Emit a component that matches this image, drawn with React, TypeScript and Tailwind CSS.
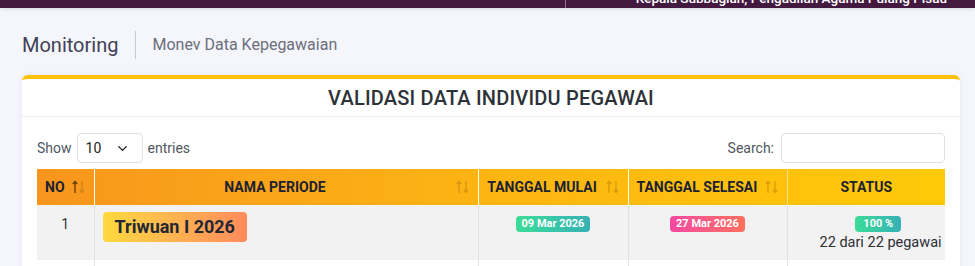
import { ChevronDown } from "lucide-react";

function Arrow({ up, className }: { up?: boolean; className: string }) {
    return (
        <svg width="6" height="14" viewBox="0 0 6 14" className={className}>
            {up ? (
                <path d="M3 1.5V13M0.8 4L3 1.5L5.2 4" fill="none" stroke="currentColor" strokeWidth="1.3" />
            ) : (
                <path d="M3 1V12.5M0.8 10L3 12.5L5.2 10" fill="none" stroke="currentColor" strokeWidth="1.3" />
            )}
        </svg>
    );
}

function SortIcon({ active }: { active?: boolean }) {
    return (
        <span className="absolute right-[9px] top-1/2 -translate-y-1/2 flex gap-[1px]">
            <Arrow up className={active ? "text-[#3b2a00] opacity-80" : "text-[#7a5200] opacity-30"} />
            <Arrow className="text-[#7a5200] opacity-30" />
        </span>
    );
}

export default function App() {
    return (
        <div className="w-[975px] h-[266px] overflow-hidden bg-[#f5f5fc] font-['Roboto',sans-serif]">
            {/* top bar */}
            <div className="h-[8px] bg-[#43193f] flex overflow-hidden shadow-[0_1px_4px_rgba(0,0,0,0.12)] relative z-10">
                <div className="w-[565px]" />
                <div className="flex-1 border-l border-white/40 flex justify-end pr-[28px]">
                    <span className="mt-[-9px] text-[13.5px] leading-[14px] font-medium text-white whitespace-nowrap">
                        Kepala Subbagian, Pengadilan Agama Pulang Pisau
                    </span>
                </div>
            </div>

            {/* breadcrumb */}
            <div className="flex items-center px-[22px] pt-[23px]">
                <span className="text-[20px] text-[#3f4254] leading-none">Monitoring</span>
                <div className="w-px h-[28px] bg-[#c7c9d3] ml-[17px] mr-[16px]" />
                <span className="text-[16px] text-[#6b6f7b]">Monev Data Kepegawaian</span>
            </div>

            {/* card */}
            <div className="ml-[22px] mt-[16px] w-[938px] bg-white rounded-[6px] border-t-4 border-[#ffc107] shadow-[0_0_6px_rgba(80,80,160,0.08)]">
                <div className="h-[38px] flex items-center justify-center border-b border-[#eceef2]">
                    <h2 className="text-[20px] font-medium text-[#2d3238] tracking-[0.2px]">VALIDASI DATA INDIVIDU PEGAWAI</h2>
                </div>

                <div className="px-[15px] pt-[16px]">
                    <div className="flex items-center justify-between mb-[6px] text-[14px] text-[#505660]">
                        <div className="flex items-center gap-[5px]">
                            <span>Show</span>
                            <div className="w-[66px] h-[30px] border border-[#dfe2e6] rounded-[4px] flex items-center justify-between pl-[8px] pr-[12px] text-[#222]">
                                <span>10</span>
                                <ChevronDown size={15} strokeWidth={2.2} />
                            </div>
                            <span>entries</span>
                        </div>
                        <div className="flex items-center gap-[7px]">
                            <span>Search:</span>
                            <div className="w-[164px] h-[30px] border border-[#dfe2e6] rounded-[4px]" />
                        </div>
                    </div>

                    <table className="w-[908px] border-collapse table-fixed">
                        <colgroup>
                            <col className="w-[57px]" />
                            <col className="w-[384px]" />
                            <col className="w-[150px]" />
                            <col className="w-[159px]" />
                            <col className="w-[158px]" />
                        </colgroup>
                        <thead>
                            <tr className="h-[36px] bg-gradient-to-r from-[#f7951d] via-[#fdb512] to-[#ffc908] text-[14px] font-bold text-[#1c2230]">
                                <th className="relative text-left pl-[8px] border-r border-white/50">
                                    NO
                                    <SortIcon active />
                                </th>
                                <th className="relative pl-[8px] pr-[30px] border-r border-white/50">
                                    NAMA PERIODE
                                    <SortIcon />
                                </th>
                                <th className="relative pl-[8px] pr-[30px] border-r border-white/50 whitespace-nowrap">
                                    TANGGAL MULAI
                                    <SortIcon />
                                </th>
                                <th className="relative pl-[8px] pr-[30px] border-r border-white/50 whitespace-nowrap">
                                    TANGGAL SELESAI
                                    <SortIcon />
                                </th>
                                <th className="px-[8px]">STATUS</th>
                            </tr>
                        </thead>
                        <tbody>
                            <tr className="bg-[#f2f2f2] align-top h-[55px] leading-none">
                                <td className="text-center pt-[9px] text-[14px] leading-[20px] text-[#333] border-r border-[#e2e2e2]">1</td>
                                <td className="px-[8px] pt-[7px] border-r border-[#e2e2e2]">
                                    <span className="inline-block align-top h-[30px] leading-[30px] px-[12px] rounded-[4px] bg-gradient-to-r from-[#ffd93d] to-[#ff8a5b] text-[18px] font-bold text-[#1f2733]">
                                        Triwuan I 2026
                                    </span>
                                </td>
                                <td className="text-center pt-[11px] border-r border-[#e2e2e2]">
                                    <span className="inline-block align-top h-[16px] leading-[16px] px-[6px] rounded-[4px] bg-gradient-to-r from-[#3ddc97] to-[#36b1b5] text-[11px] font-bold text-white">
                                        09 Mar 2026
                                    </span>
                                </td>
                                <td className="text-center pt-[11px] border-r border-[#e2e2e2]">
                                    <span className="inline-block align-top h-[16px] leading-[16px] px-[6px] rounded-[4px] bg-gradient-to-r from-[#f7479f] to-[#ff6f5e] text-[11px] font-bold text-white">
                                        27 Mar 2026
                                    </span>
                                </td>
                                <td className="text-center pt-[11px] pl-[32px] pr-[8px]">
                                    <span className="inline-block align-top h-[16px] leading-[16px] px-[8px] rounded-[4px] bg-gradient-to-r from-[#3ddc97] to-[#36b1b5] text-[11px] font-bold text-white">
                                        100 %
                                    </span>
                                    <div className="text-[14.5px] leading-[20px] text-[#2b2f36] mt-[1px] whitespace-nowrap">22 dari 22 pegawai</div>
                                </td>
                            </tr>
                            <tr className="bg-white h-[40px]">
                                <td className="border-r border-[#e2e2e2]" />
                                <td className="border-r border-[#e2e2e2]" />
                                <td className="border-r border-[#e2e2e2]" />
                                <td className="border-r border-[#e2e2e2]" />
                                <td />
                            </tr>
                        </tbody>
                    </table>
                </div>
            </div>
        </div>
    );
}
